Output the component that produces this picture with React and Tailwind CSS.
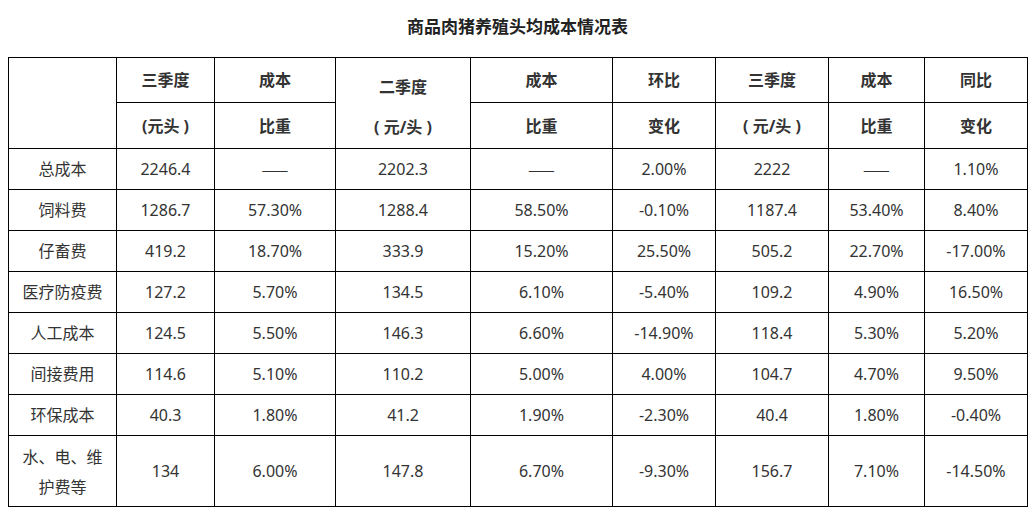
import React from "react"

const rows = [
    ["总成本", "2246.4", "——", "2202.3", "——", "2.00%", "2222", "——", "1.10%"],
    ["饲料费", "1286.7", "57.30%", "1288.4", "58.50%", "-0.10%", "1187.4", "53.40%", "8.40%"],
    ["仔畜费", "419.2", "18.70%", "333.9", "15.20%", "25.50%", "505.2", "22.70%", "-17.00%"],
    ["医疗防疫费", "127.2", "5.70%", "134.5", "6.10%", "-5.40%", "109.2", "4.90%", "16.50%"],
    ["人工成本", "124.5", "5.50%", "146.3", "6.60%", "-14.90%", "118.4", "5.30%", "5.20%"],
    ["间接费用", "114.6", "5.10%", "110.2", "5.00%", "4.00%", "104.7", "4.70%", "9.50%"],
    ["环保成本", "40.3", "1.80%", "41.2", "1.90%", "-2.30%", "40.4", "1.80%", "-0.40%"],
]

const widths = [108, 98, 121, 135, 142, 103, 113, 96, 103]

const cell = "border border-black text-center align-middle p-0"
const cjk = { fontFamily: '"Noto Sans CJK SC", sans-serif' }

// dashes drawn with the CJK face so the two em dashes join into one line
const Value = ({ v }) => (v === "——" ? <span style={cjk}>{v}</span> : v)

export default function App() {
    return (
        <div
            className="w-[1035px] h-[512px] bg-white text-[#333] text-[16px]"
            style={{ fontFamily: '"Noto Sans", "Noto Sans CJK SC", sans-serif' }}
        >
            {/* Title */}
            <div className="h-[57px] flex items-center justify-center pb-[3px]">
                <h1 className="text-[17px] font-bold text-[#222]">商品肉猪养殖头均成本情况表</h1>
            </div>

            <table className="ml-[8px] w-[1020px] table-fixed border-collapse">
                <colgroup>
                    {widths.map((w, i) => (
                        <col key={i} style={{ width: w }} />
                    ))}
                </colgroup>
                <tbody>
                    <tr className="h-[45px] font-bold">
                        <td rowSpan={2} className={cell}></td>
                        <td className={cell}>三季度</td>
                        <td className={cell}>成本</td>
                        <td rowSpan={2} className={cell}>
                            <div className="flex flex-col items-center gap-[16px] pt-[8px]">
                                <span>二季度</span>
                                <span className="whitespace-pre">( 元/头 )</span>
                            </div>
                        </td>
                        <td className={cell}>成本</td>
                        <td className={cell}>环比</td>
                        <td className={cell}>三季度</td>
                        <td className={cell}>成本</td>
                        <td className={cell}>同比</td>
                    </tr>
                    <tr className="h-[46px] font-bold">
                        <td className={cell + " whitespace-pre"}>(元头 )</td>
                        <td className={cell}>比重</td>
                        <td className={cell}>比重</td>
                        <td className={cell}>变化</td>
                        <td className={cell + " whitespace-pre"}>( 元/头 )</td>
                        <td className={cell}>比重</td>
                        <td className={cell}>变化</td>
                    </tr>
                    {rows.map((r, i) => (
                        <tr key={i} className="h-[41px]">
                            {r.map((v, j) => (
                                <td key={j} className={cell}>
                                    <Value v={v} />
                                </td>
                            ))}
                        </tr>
                    ))}
                    <tr className="h-[71px]">
                        <td className={cell}>
                            <div className="leading-[30px] pt-[2px]">
                                水、电、维
                                <br />
                                护费等
                            </div>
                        </td>
                        {["134", "6.00%", "147.8", "6.70%", "-9.30%", "156.7", "7.10%", "-14.50%"].map((v, j) => (
                            <td key={j} className={cell}>{v}</td>
                        ))}
                    </tr>
                </tbody>
            </table>
        </div>
    )
}
